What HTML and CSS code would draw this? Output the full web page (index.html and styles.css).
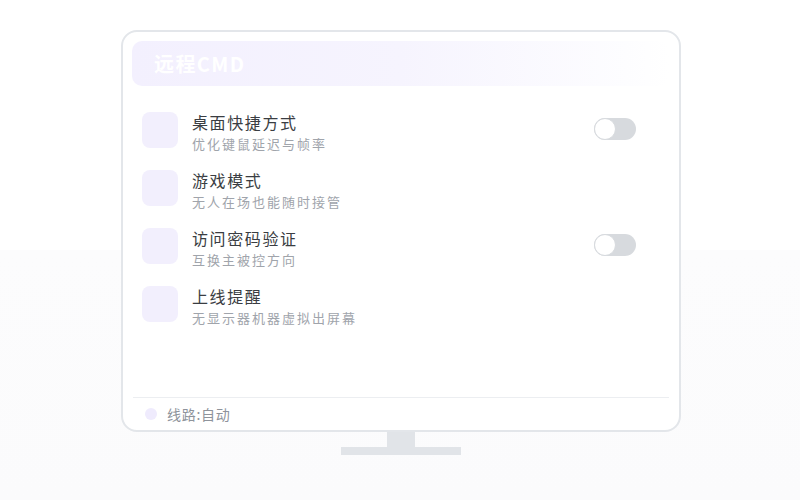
FILE: index.html
```html
<!DOCTYPE html>
<html lang="zh-CN">
<head>
<meta charset="utf-8">
<title>远程CMD</title>
<link rel="stylesheet" href="styles.css">
</head>
<body>
<div class="stage">
  <div class="monitor">
    <div class="screen">
      <div class="header"><span class="title">远程CMD</span></div>
      <ul class="list">
        <li class="row">
          <span class="icon"></span>
          <div class="text">
            <div class="name">桌面快捷方式</div>
            <div class="desc">优化键鼠延迟与帧率</div>
          </div>
          <span class="toggle"><span class="knob"></span></span>
        </li>
        <li class="row">
          <span class="icon"></span>
          <div class="text">
            <div class="name">游戏模式</div>
            <div class="desc">无人在场也能随时接管</div>
          </div>
        </li>
        <li class="row">
          <span class="icon"></span>
          <div class="text">
            <div class="name">访问密码验证</div>
            <div class="desc">互换主被控方向</div>
          </div>
          <span class="toggle"><span class="knob"></span></span>
        </li>
        <li class="row">
          <span class="icon"></span>
          <div class="text">
            <div class="name">上线提醒</div>
            <div class="desc">无显示器机器虚拟出屏幕</div>
          </div>
        </li>
      </ul>
      <div class="footer">
        <span class="dot"></span>
        <span class="route">线路:自动</span>
      </div>
    </div>
    <div class="neck"></div>
    <div class="base"></div>
  </div>
</div>
</body>
</html>
```

FILE: styles.css
```css
html, body {
  margin: 0;
  padding: 0;
}
body {
  width: 800px;
  height: 500px;
  overflow: hidden;
  font-family: "Noto Sans CJK SC", "Noto Sans", "Liberation Sans", sans-serif;
  background: linear-gradient(to bottom, #ffffff 0, #ffffff 250px, #fcfcfd 250px, #fbfbfc 100%);
}
.stage {
  padding-top: 30px;
  padding-left: 121px;
}
.monitor {
  width: 560px;
  display: flex;
  flex-direction: column;
  align-items: center;
}
.screen {
  box-sizing: border-box;
  width: 560px;
  height: 402px;
  border: 2px solid #e3e6ea;
  border-radius: 16px;
  background: #ffffff;
  padding: 9px 10px 0 10px;
  display: flex;
  flex-direction: column;
}
.header {
  height: 45px;
  margin-left: -1px;
  border-radius: 10px;
  background: linear-gradient(to right, #f3f0fe 0%, #f6f4fe 50%, #fdfdff 92%, #ffffff 100%);
  display: flex;
  align-items: center;
  padding-left: 22px;
}
.title {
  color: #ffffff;
  font-size: 20px;
  font-weight: 700;
  letter-spacing: 1.4px;
}
.list {
  list-style: none;
  margin: 26px 0 0 0;
  padding: 0 33px 0 9px;
  display: flex;
  flex-direction: column;
  gap: 18px;
  flex: 1;
}
.row {
  display: flex;
  align-items: flex-start;
  height: 40px;
}
.icon {
  width: 36px;
  height: 36px;
  border-radius: 8px;
  background: #f2effd;
  flex: none;
}
.text {
  margin-left: 14px;
  margin-top: -2px;
  flex: 1;
}
.name {
  font-size: 16px;
  line-height: 24px;
  letter-spacing: 1.6px;
  color: #3a3d42;
}
.desc {
  font-size: 13px;
  line-height: 19px;
  letter-spacing: 2px;
  color: #a0a4ab;
}
.toggle {
  position: relative;
  margin-top: 6px;
  width: 42px;
  height: 22px;
  border-radius: 11px;
  background: #d7dade;
  flex: none;
}
.knob {
  position: absolute;
  left: 0;
  top: 0;
  box-sizing: border-box;
  width: 22px;
  height: 22px;
  border-radius: 50%;
  background: #ffffff;
  border: 1px solid #d7dade;
}
.footer {
  height: 32px;
  border-top: 1px solid #eceef1;
  display: flex;
  align-items: center;
  padding-left: 12px;
}
.dot {
  width: 12px;
  height: 12px;
  border-radius: 50%;
  background: #efebfd;
}
.route {
  margin-left: 10px;
  font-size: 14px;
  letter-spacing: 0.7px;
  color: #8e939b;
}
.neck {
  width: 28px;
  height: 15px;
  background: #e1e4e8;
}
.base {
  width: 120px;
  height: 8px;
  background: #e1e4e8;
}
```
